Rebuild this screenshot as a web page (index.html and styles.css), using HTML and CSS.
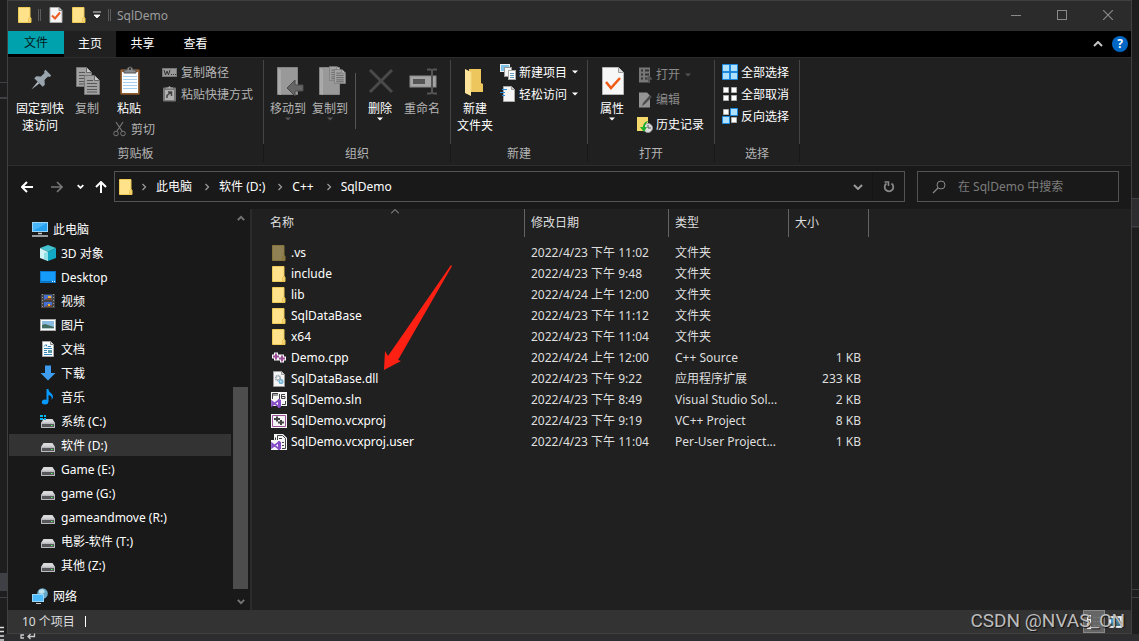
FILE: index.html
```html
<!DOCTYPE html>
<html lang="zh-CN">
<head>
<meta charset="utf-8">
<title>SqlDemo</title>
<link rel="stylesheet" href="styles.css">
</head>
<body>
<svg class="defs" aria-hidden="true">
  <symbol id="folder" viewBox="0 0 16 16"><path d="M2 .5h11v10l1 .5v4.500H1.500V.5z" fill="#ffe28a" stroke="#eecb57"/><path d="M11.500 15v-3.500l1.500-1V15z" fill="#ffe9a6" stroke="#e6b93c" stroke-width=".7"/></symbol>
  <symbol id="caret" viewBox="0 0 6 4"><path d="M0 .5h6L3 3.500z" fill="currentColor"/></symbol>
  <symbol id="chev" viewBox="0 0 6 8"><path d="M1.500 1l3 3-3 3" fill="none" stroke="currentColor" stroke-width="1.300"/></symbol>
  <symbol id="down" viewBox="0 0 10 6"><path d="M1 1l4 4 4-4" fill="none" stroke="currentColor" stroke-width="2"/></symbol>
  <symbol id="up" viewBox="0 0 10 6"><path d="M1 5l4-4 4 4" fill="none" stroke="currentColor" stroke-width="2"/></symbol>
  <symbol id="drive" viewBox="0 0 16 16"><path d="M3.500 6h9L15 10H1z" fill="#d9d9dc"/><rect x="1" y="9.500" width="14" height="5.500" rx=".5" fill="#b9babd"/><rect x="2" y="11" width="12" height="3" fill="#55575a"/><rect x="11" y="12" width="1.500" height="1" fill="#5dff5d"/></symbol>
  <symbol id="check-doc" viewBox="0 0 22 28"><path d="M.5.5h16l5 5v22H.5z" fill="#f7f7f7" stroke="#b5b5b5"/><path d="M16.500.5v5h5" fill="#ddd" stroke="#999"/><path d="M4 15l5 6 9-10" fill="none" stroke="#f05a14" stroke-width="2.500"/></symbol>
  <symbol id="sheet" viewBox="0 0 16 20"><path d="M.5.5h10l5 5v14H.5z" fill="#a2a2a2" stroke="#777"/><path d="M10.500.5v5h5" fill="#c8c8c8" stroke="#666"/><path d="M3 5.500h6M3 8.500h10M3 11.500h10M3 14.500h10M3 17h10" stroke="#575757"/></symbol>
  <symbol id="vs" viewBox="0 0 10 9"><path d="M7 0l3 1v7L7 9z" fill="#854cc7"/><path d="M1 2.500v4L8 1v7z" fill="none" stroke="#854cc7" stroke-width="1.600"/></symbol>
</svg>

<main class="window">
  <header class="titlebar">
    <svg class="i16"><use href="#folder"/></svg>
    <span class="grip"></span>
    <button class="quick" aria-label="属性"><svg class="i16" viewBox="0 0 16 16"><path d="M2 .5h9l3 3v12H2z" fill="#f5f5f5" stroke="#aaa"/><path d="M11 .5v3h3" fill="#ccc" stroke="#888"/><path d="M4 8.500l3 3 5-6" fill="none" stroke="#ed5b22" stroke-width="2"/></svg></button>
    <button class="quick" aria-label="新建文件夹"><svg class="i16"><use href="#folder"/></svg></button>
    <button class="more" aria-label="自定义快速访问工具栏"><svg width="8" height="8" viewBox="0 0 8 8"><path d="M0 1h8M1 4h6L4 7z" fill="#fff" stroke="#fff" stroke-width=".8"/></svg></button>
    <span class="grip"></span>
    <h1>SqlDemo</h1>
    <div class="caption">
      <button aria-label="最小化"><svg width="10" height="10"><path d="M0 5.500h10" stroke="#898989"/></svg></button>
      <button aria-label="最大化"><svg width="10" height="10"><rect x=".5" y=".5" width="9" height="9" fill="none" stroke="#898989"/></svg></button>
      <button aria-label="关闭"><svg width="10" height="10"><path d="M0 0l10 10M10 0L0 10" stroke="#898989" stroke-width="1.200"/></svg></button>
    </div>
  </header>

  <nav class="tabs">
    <button class="tab file">文件</button>
    <button class="tab active">主页</button>
    <button class="tab">共享</button>
    <button class="tab">查看</button>
    <div class="tabs-end">
      <button aria-label="最小化功能区"><svg width="10" height="6"><use href="#up"/></svg></button>
      <button class="help" aria-label="帮助">?</button>
    </div>
  </nav>

  <section class="ribbon">
    <div class="group clipboard">
      <div class="tools">
        <button class="big pin"><svg viewBox="0 0 32 32"><g transform="translate(18 13) rotate(45)"><path d="M-4-9h8v2l-1.500 1v5L6 2v3H-6V2l3.500-3v-5L-4-7z" fill="#9aa4ad"/><path d="M-1.200 5h2.400L0 15z" fill="#b2b9bf"/></g></svg>固定到快速访问</button>
        <button class="big dim"><svg viewBox="0 0 32 32"><use href="#sheet" x="5" y="1" width="16" height="20"/><use href="#sheet" x="13" y="9" width="16" height="20"/></svg>复制</button>
        <div class="paste">
          <button class="big"><svg viewBox="0 0 32 32"><rect x="7.500" y="3.500" width="19" height="25" rx="1" fill="#926037" stroke="#714823"/><path d="M9 6h16v21H9z" fill="#fafcff"/><path d="M10 10.500h14M10 13.500h14M10 16.500h14M10 19.500h14M10 22.500h14" stroke="#a6cfec"/><path d="M11 7V4h3c0-4 6-4 6 0h3v3z" fill="#878b8e" stroke="#555"/><circle cx="17" cy="3" r="1" fill="#222"/></svg>粘贴</button>
          <button class="small dim cut"><svg class="i16" viewBox="0 0 16 16"><path d="M4 1l6 9M11 1l-6 9" stroke="#777" stroke-width="1.200"/><circle cx="4" cy="12.500" r="2.300" fill="none" stroke="#777"/><circle cx="11" cy="12.500" r="2.300" fill="none" stroke="#777"/></svg>剪切</button>
        </div>
        <div class="list">
          <button class="small dim"><svg class="i16" viewBox="0 0 16 16"><rect x=".5" y="4.500" width="14" height="8" fill="#999" stroke="#777"/><path d="M2 6l1.500 5L5 7l1.500 4L8 6" stroke="#333" fill="none"/><path d="M9 10.500h1M11 10.500h1M13 10.500h1" stroke="#333"/></svg>复制路径</button>
          <button class="small dim"><svg class="i16" viewBox="0 0 16 16"><rect x="1" y="1.500" width="13" height="14" rx="1" fill="#777"/><rect x="3" y="4" width="9" height="10" fill="#b0b0b0"/><path d="M4 2.500h7v-1H9L7.500 0 6 1.500H4z" fill="#aaa"/><path d="M5 12V9.500L9 6M6 6h3.500v4" fill="none" stroke="#444" stroke-width="1.500"/></svg>粘贴快捷方式</button>
        </div>
      </div>
      <h2>剪贴板</h2>
    </div>

    <div class="group organize">
      <div class="tools">
        <button class="big dim"><svg viewBox="0 0 32 32"><path d="M5.500 1.500h20v27h-20z" fill="#999" stroke="#858585"/><path d="M6 2l3 2v25l-3-1z" fill="#aaa"/><path d="M15 22l8-8v5h8v6h-8v5z" fill="#666" stroke="#4a4a4a"/></svg>移动到<svg class="caret"><use href="#caret"/></svg></button>
        <button class="big dim"><svg viewBox="0 0 32 32"><path d="M5.500 1.500h20v27h-20z" fill="#999" stroke="#858585"/><path d="M6 2l3 2v25l-3-1z" fill="#aaa"/><use href="#sheet" x="15" y="0" width="12" height="15"/><use href="#sheet" x="20" y="3" width="12" height="15"/></svg>复制到<svg class="caret"><use href="#caret"/></svg></button>
        <span class="divider"></span>
        <button class="big"><svg viewBox="0 0 32 32"><path d="M6 4l22 22M28 4L6 26" stroke="#4a4a4a" stroke-width="3"/></svg>删除<svg class="caret"><use href="#caret"/></svg></button>
        <button class="big dim"><svg viewBox="0 0 32 32"><rect x="4" y="10" width="26" height="11" fill="#a4a4a4" stroke="#8a8a8a"/><rect x="7" y="13" width="12" height="5" fill="#555"/><path d="M21 3.500h3.500l1.500 1 1.500-1H31M21 27.500h3.500l1.500-1 1.500 1H31M26 4v23" fill="none" stroke="#555" stroke-width="2"/></svg>重命名</button>
      </div>
      <h2>组织</h2>
    </div>

    <div class="group create">
      <div class="tools">
        <button class="big"><svg viewBox="0 0 32 32"><path d="M10 3h12v14l2 1v8H10z" fill="#edc65e"/><path d="M6 3l6 3v24l-6-3z" fill="#ffe49a"/><path d="M12 6v18" stroke="#f5d57f"/></svg>新建<br>文件夹</button>
        <div class="list">
          <button class="small"><svg class="i16" viewBox="0 0 16 16"><rect x=".5" y=".5" width="9" height="7" fill="#7cc1e8" stroke="#eee"/><rect x="4.500" y="3.500" width="7" height="9" fill="#f4f4f4" stroke="#999"/><rect x="8.500" y="6.500" width="7" height="9" fill="#fff" stroke="#aaa"/><path d="M10 9.500h4M10 11.500h4M10 13.500h4" stroke="#679dbe"/></svg>新建项目<svg class="caret"><use href="#caret"/></svg></button>
          <button class="small"><svg class="i16" viewBox="0 0 16 16"><path d="M3.500.5h8l3 3v12h-11z" fill="#f5f5f5" stroke="#aaa"/><path d="M11.500.5v3h3" fill="#ccc" stroke="#999"/><path d="M2 3.500h5M0 6.500h5M2 9.500h3" stroke="#2a8bd4" stroke-width="1.200"/></svg>轻松访问<svg class="caret"><use href="#caret"/></svg></button>
        </div>
      </div>
      <h2>新建</h2>
    </div>

    <div class="group open">
      <div class="tools">
        <button class="big"><svg viewBox="0 0 32 32"><use href="#check-doc" x="6" y="1" width="22" height="28"/></svg>属性<svg class="caret"><use href="#caret"/></svg></button>
        <div class="list tall">
          <button class="small off"><svg class="i16" viewBox="0 0 16 16"><path d="M2 .5h11v15H2z" fill="#777"/><path d="M4 3.500h2M8 3.500h4M4 7.500h2M8 7.500h4M4 11.500h2M8 11.500h2" stroke="#333" stroke-width="2"/><path d="M12 16v-5M9.500 12.500L12 10l2.500 2.500" stroke="#555" stroke-width="2" fill="none"/></svg>打开<svg class="caret"><use href="#caret"/></svg></button>
          <button class="small off"><svg class="i16" viewBox="0 0 16 16"><path d="M2 .5h8l3 3v12H2z" fill="#949494"/><path d="M5 14l1-3 7-8 2 2-7 7z" fill="#4b4b4b"/></svg>编辑</button>
          <button class="small"><svg class="i16" viewBox="0 0 16 16"><path d="M0 0h11v14H0z" fill="#f5d86b"/><circle cx="11" cy="11" r="4.500" fill="#ddd" stroke="#999"/><path d="M11 8v3h3" fill="none" stroke="#555"/><path d="M12 4C8 4 6 7 6 10H3l4 5 3-5H8c0-3 1-4 4-6z" fill="#1faf31"/></svg>历史记录</button>
        </div>
      </div>
      <h2>打开</h2>
    </div>

    <div class="group select">
      <div class="tools">
        <div class="list">
          <button class="small"><svg class="i16" viewBox="0 0 16 16"><path d="M.5.5h7v7h-7zM8.500.5h7v7h-7zM.5 8.500h7v7h-7zM8.500 8.500h7v7h-7z" fill="#aee0ff" stroke="#1d8be0"/></svg>全部选择</button>
          <button class="small"><svg class="i16" viewBox="0 0 16 16"><path d="M1.500 1.500h5v5h-5zM9.500 1.500h5v5h-5zM1.500 9.500h5v5h-5zM9.500 9.500h5v5h-5z" fill="#fff" stroke="#b0b0b0"/></svg>全部取消</button>
          <button class="small"><svg class="i16" viewBox="0 0 16 16"><path d="M1.500 1.500h5v5h-5zM9.500 9.500h5v5h-5z" fill="#fff" stroke="#b0b0b0"/><path d="M8.500.5h7v7h-7zM.5 8.500h7v7h-7z" fill="#aee0ff" stroke="#1d8be0"/></svg>反向选择</button>
        </div>
      </div>
      <h2>选择</h2>
    </div>
  </section>

  <section class="navbar">
    <div class="arrows">
      <button aria-label="后退"><svg width="12" height="12" viewBox="0 0 12 12"><path d="M12 6H1M6 1L1 6l5 5" fill="none" stroke="#fff" stroke-width="2"/></svg></button>
      <button class="forward" aria-label="前进"><svg width="12" height="12" viewBox="0 0 12 12"><path d="M0 6h11M6 1l5 5-5 5" fill="none" stroke="#777" stroke-width="1.600"/></svg></button>
      <button class="recent" aria-label="最近浏览的位置"><svg width="7" height="5" viewBox="0 0 10 6"><path d="M1 1l4 4 4-4" fill="none" stroke="#fff" stroke-width="2.500"/></svg></button>
      <button class="parent" aria-label="上移"><svg width="12" height="12" viewBox="0 0 12 12"><path d="M6 12V1M1 6l5-5 5 5" fill="none" stroke="#fff" stroke-width="2"/></svg></button>
    </div>
    <div class="address">
      <svg class="i16"><use href="#folder"/></svg>
      <svg class="chev first"><use href="#chev"/></svg><a href="#pc">此电脑</a>
      <svg class="chev"><use href="#chev"/></svg><a href="#d">软件 (D:)</a>
      <svg class="chev"><use href="#chev"/></svg><a href="#cpp">C++</a>
      <svg class="chev"><use href="#chev"/></svg><a href="#sqldemo">SqlDemo</a>
      <button class="history" aria-label="以前的位置"><svg width="10" height="6"><use href="#down"/></svg></button>
      <button class="refresh" aria-label="刷新"><svg width="12" height="12" viewBox="0 0 12 12"><path d="M8.500 2.500A4.300 4.300 0 1 1 3.500 2.500" fill="none" stroke="#888" stroke-width="1.800"/><path d="M1.500 1h4v4" fill="none" stroke="#888" stroke-width="1.600"/></svg></button>
    </div>
    <label class="search">
      <svg width="14" height="14" viewBox="0 0 14 14"><circle cx="9" cy="5" r="4" fill="none" stroke="#888"/><path d="M6 8l-5 5" stroke="#888" stroke-width="1.200"/></svg>
      <input type="text" aria-label="搜索" placeholder="在 SqlDemo 中搜索">
    </label>
  </section>

  <div class="content">
    <aside class="sidebar">
      <ul class="tree">
        <li class="root"><a href="#pc"><svg class="i16" viewBox="0 0 16 16"><rect x=".5" y="1.500" width="15" height="9" fill="#49b6f8" stroke="#9bd6f8"/><path d="M1 10L15 2v8z" fill="#27a0ee"/><path d="M6 12.500h4M0 15h16" stroke="#c2c8cc" stroke-width="1.500"/></svg>此电脑</a></li>
        <li><a href="#3d"><svg class="i16" viewBox="0 0 16 16"><path d="M8 0l8 3-8 4-8-4z" fill="#43c2cf"/><path d="M0 3l8 4v9l-8-3z" fill="#d0f3f6"/><path d="M16 3L8 7v9l8-3z" fill="#12a9c4"/><path d="M8 7l-4 1v6l4 2z" fill="#8fe0e8"/></svg>3D 对象</a></li>
        <li><a href="#desktop"><svg class="i16" viewBox="0 0 16 16"><rect x=".5" y="2.500" width="15" height="11" fill="#159cf9" stroke="#0a77cc"/><path d="M1 12.500h14" stroke="#0870bd"/><path d="M12 12.500h1M14 12.500h1" stroke="#fff"/></svg>Desktop</a></li>
        <li><a href="#videos"><svg class="i16" viewBox="0 0 16 16"><path d="M1 1h14v14H1z" fill="#444"/><path d="M4 2h8v5H4zM4 9h8v5H4z" fill="#4670cf"/><path d="M8 5h4v2H4zM8 12h4v2H4z" fill="#7b4b35"/><path d="M8 3h3v2H8zM8 11h2v2H8z" fill="#edb233"/><path d="M2.500 1v14M13.500 1v14" stroke="#999" stroke-dasharray="1 2"/></svg>视频</a></li>
        <li><a href="#pictures"><svg class="i16" viewBox="0 0 16 16"><rect x=".5" y="2.500" width="15" height="11" fill="#fff" stroke="#aaa"/><path d="M2 4h12v8H2z" fill="#8bbce0"/><path d="M2 8l3-1 9 3v2H2z" fill="#446d62"/><path d="M2 11h12v1H2z" fill="#b0cbd0"/></svg>图片</a></li>
        <li><a href="#documents"><svg class="i16" viewBox="0 0 16 16"><path d="M2.500.5h8l3 3v12h-11z" fill="#fff" stroke="#aaa"/><path d="M10.500.5v3h3" fill="#ddd" stroke="#888"/><path d="M4 5.500l2-2 1 2M8 5.500h3M4 7.500h8M4 9.500h3M4 11.500h3M4 13.500h8" fill="none" stroke="#2f83bd"/><path d="M8 9h4v3H8z" fill="#5b9aa4"/></svg>文档</a></li>
        <li><a href="#downloads"><svg class="i16" viewBox="0 0 16 16"><path d="M5 .5h6V8h4.500L8 15.500.5 8H5z" fill="#3e9bed"/></svg>下载</a></li>
        <li><a href="#music"><svg class="i16" viewBox="0 0 16 16"><ellipse cx="5" cy="13" rx="3.200" ry="2.500" fill="#069aff"/><path d="M6.500 0h2c0 4 5 4 4.500 8.500L11.500 11c1-4-1.500-4.500-3-5v7h-2z" fill="#069aff"/></svg>音乐</a></li>
        <li><a href="#c"><svg class="i16" viewBox="0 0 16 16"><use href="#drive"/><path d="M0 2h3v2H0zM4 2h2v2H4zM0 5h3v2H0zM4 5h2v2H4z" fill="#00b7f1"/></svg>系统 (C:)</a></li>
        <li class="current"><a href="#d"><svg class="i16"><use href="#drive"/></svg>软件 (D:)</a></li>
        <li><a href="#e"><svg class="i16"><use href="#drive"/></svg>Game (E:)</a></li>
        <li><a href="#g"><svg class="i16"><use href="#drive"/></svg>game (G:)</a></li>
        <li><a href="#r"><svg class="i16"><use href="#drive"/></svg>gameandmove (R:)</a></li>
        <li><a href="#t"><svg class="i16"><use href="#drive"/></svg>电影-软件 (T:)</a></li>
        <li><a href="#z"><svg class="i16"><use href="#drive"/></svg>其他 (Z:)</a></li>
        <li class="root network"><a href="#network"><svg class="i16" viewBox="0 0 16 16"><circle cx="10.500" cy="5.500" r="5.300" fill="#69a9c8"/><path d="M7 2l4-1 2 3-3 2-3-1z" fill="#c1e2ed"/><rect x=".5" y="6.500" width="11" height="7" fill="#4bbbfb" stroke="#9bd6f8"/><path d="M4 15.500h5" stroke="#ccc"/></svg>网络</a></li>
      </ul>
      <div class="scrollbar">
        <svg width="8" height="7" viewBox="0 0 10 8"><path d="M1 6l4-4 4 4" fill="none" stroke="#747474" stroke-width="2.500"/></svg>
        <div class="track"><div class="thumb"></div></div>
        <svg width="8" height="7" viewBox="0 0 10 8"><path d="M1 2l4 4 4-4" fill="none" stroke="#747474" stroke-width="2.500"/></svg>
      </div>
    </aside>

    <section class="files">
      <table>
        <colgroup><col class="c-name"><col class="c-date"><col class="c-type"><col class="c-size"></colgroup>
        <thead><tr>
          <th><svg class="sort" width="8" height="5" viewBox="0 0 8 5"><path d="M0 4.500l4-4 4 4" fill="none" stroke="#aaa"/></svg><span>名称</span></th>
          <th><span>修改日期</span></th><th><span>类型</span></th><th><span>大小</span></th>
        </tr></thead>
        <tbody>
          <tr><td><div class="name"><svg class="i16 hidden-item"><use href="#folder"/></svg>.vs</div></td><td>2022/4/23 下午 11:02</td><td>文件夹</td><td></td></tr>
          <tr><td><div class="name"><svg class="i16"><use href="#folder"/></svg>include</div></td><td>2022/4/23 下午 9:48</td><td>文件夹</td><td></td></tr>
          <tr><td><div class="name"><svg class="i16"><use href="#folder"/></svg>lib</div></td><td>2022/4/24 上午 12:00</td><td>文件夹</td><td></td></tr>
          <tr><td><div class="name"><svg class="i16"><use href="#folder"/></svg>SqlDataBase</div></td><td>2022/4/23 下午 11:12</td><td>文件夹</td><td></td></tr>
          <tr><td><div class="name"><svg class="i16"><use href="#folder"/></svg>x64</div></td><td>2022/4/23 下午 11:04</td><td>文件夹</td><td></td></tr>
          <tr><td><div class="name"><svg class="i16" viewBox="0 0 16 16"><path d="M1 6.500h8M5 2.500v8M6 8.500h9M11 4.500v8" stroke="#f6f6f6" stroke-width="4"/><path d="M2 6.500h6M5 3.500v6M8 8.500h6M11 5.500v6" stroke="#9b4f96" stroke-width="2"/></svg>Demo.cpp</div></td><td>2022/4/24 上午 12:00</td><td>C++ Source</td><td>1 KB</td></tr>
          <tr><td><div class="name"><svg class="i16" viewBox="0 0 16 16"><path d="M2.500.5h8l3 3v12h-11z" fill="#f5f5f5" stroke="#999"/><path d="M10.500.5v3h3" fill="#ddd" stroke="#999"/><circle cx="7" cy="7" r="2.200" fill="none" stroke="#92a1ab" stroke-width="2" stroke-dasharray="1 .5"/><circle cx="10" cy="10.500" r="1.800" fill="#c5e3ef" stroke="#77b5d4" stroke-width="1.500"/></svg>SqlDataBase.dll</div></td><td>2022/4/23 下午 9:22</td><td>应用程序扩展</td><td>233 KB</td></tr>
          <tr><td><div class="name"><svg class="i16" viewBox="0 0 16 16"><path d="M0 0h16v14H0z" fill="#f6f6f6"/><path d="M1.500 7V1.500H7M1 3h6M14.500 9v3.500H11" fill="none" stroke="#424242"/><path d="M8.500 2v5M14 2.500h-3.500v4H14v-2h-3.500" fill="none" stroke="#424242"/><use href="#vs" x="0" y="7" width="10" height="9"/></svg>SqlDemo.sln</div></td><td>2022/4/23 下午 8:49</td><td>Visual Studio Sol...</td><td>2 KB</td></tr>
          <tr><td><div class="name"><svg class="i16" viewBox="0 0 16 16"><path d="M0 1h16v14H0z" fill="#f6f6f6"/><path d="M1.500 2.500h13v11h-13z" fill="none" stroke="#9b4f96"/><path d="M3 6h6M6 3.500v5M7 9.500h6M10 7v5" stroke="#424242" stroke-width="2"/></svg>SqlDemo.vcxproj</div></td><td>2022/4/23 下午 9:19</td><td>VC++ Project</td><td>8 KB</td></tr>
          <tr><td><div class="name"><svg class="i16" viewBox="0 0 16 16"><path d="M3 0h9l4 4v12H9V9H3z" fill="#f6f6f6"/><path d="M0 6h10v10H0z" fill="#f6f6f6"/><path d="M4.500 6V3.500M6.500 6V1.500h5l3 3v10H11" fill="none" stroke="#424242"/><path d="M8 4.500h3M11 8.500h2M11 11.500h2" stroke="#424242"/><use href="#vs" x="0" y="7" width="10" height="9"/></svg>SqlDemo.vcxproj.user</div></td><td>2022/4/23 下午 11:04</td><td>Per-User Project...</td><td>1 KB</td></tr>
        </tbody>
      </table>
      <svg class="pointer" width="70" height="108" viewBox="0 0 70 108" aria-hidden="true"><path d="M68 1l1 1-54 94 3 1-17 9 1-19 3 5z" fill="#ff2014"/></svg>
    </section>
  </div>

  <footer class="status">
    <span>10 个项目</span><span class="bar"></span>
    <div class="views">
      <button class="on" aria-label="详细信息"><svg width="16" height="16" viewBox="0 0 16 16"><path d="M1 1h4v14H1z" fill="#eee"/><path d="M2 3.500h2M2 7.500h2M2 11.500h2" stroke="#444" stroke-width="2"/><path d="M7 3.500h3M11 3.500h3M7 7.500h3M11 7.500h3M7 11.500h3M11 11.500h3" stroke="#777"/></svg></button>
      <button aria-label="大图标"><svg width="16" height="16" viewBox="0 0 16 16"><rect x="1" y="2.500" width="13" height="11" fill="#e8f4ff" stroke="#ddd"/><path d="M3 4h9v5H3z" fill="#4d99dd"/><path d="M3 9l4-2 5 3v2H3z" fill="#457889"/></svg></button>
    </div>
  </footer>
</main>
<svg class="behind" width="40" height="15" viewBox="0 0 40 15" aria-hidden="true"><path d="M0 1.500h4M0 5.500h4M0 10h4M0 14h4" stroke="#ddd" stroke-width="1.500"/><path d="M24 9h-3v3h3M34.500 7.500v3H28M30.500 8L28 10.500l2.500 2.500" fill="none" stroke="#ccc" stroke-width="1.300"/></svg>
<div class="watermark">CSDN @NVAS_CN</div>
</body>
</html>
```

FILE: styles.css
```css
* { box-sizing: border-box; }

body {
  margin: 0;
  min-height: 100vh;
  display: flex;
  flex-direction: column;
  padding: 0 7px 7px;
  font: 12px/17px "Noto Sans", "Noto Sans CJK SC", sans-serif;
  color: #fff;
  background:
    linear-gradient(#3f3f46, #3f3f46) 0 82px / 7px 1px no-repeat,
    linear-gradient(#3f3f46, #3f3f46) 0 97px / 7px 2px no-repeat,
    linear-gradient(#3f3f46, #3f3f46) 0 573px / 7px 18px no-repeat,
    linear-gradient(#3f3f46, #3f3f46) 0 597px / 7px 1px no-repeat,
    linear-gradient(#3f3f46, #3f3f46) 100% 198px / 7px 1px no-repeat,
    linear-gradient(#3f3f46, #3f3f46) 100% 226px / 7px 1px no-repeat,
    linear-gradient(#3f3f46, #3f3f46) 100% 589px / 7px 1px no-repeat,
    linear-gradient(#3f3f46, #3f3f46) 100% 597px / 7px 1px no-repeat,
    linear-gradient(#2d2d30, #2d2d30) 100% 198px / 7px 30px no-repeat,
    linear-gradient(#2d2d30, #2d2d30) 0 100% / 100% 7px no-repeat,
    #1e1e1e;
}

button {
  font: inherit;
  color: inherit;
  background: none;
  border: 0;
  padding: 0;
}

a { color: inherit; text-decoration: none; }
svg { display: block; flex: none; }
h1, h2 { margin: 0; font: inherit; }
.defs { display: none; }
.i16 { width: 16px; height: 16px; }

.window {
  flex: 1;
  display: flex;
  flex-direction: column;
  border: 1px solid #404040;
  background: #191919;
}

/* title bar */
.titlebar {
  display: flex;
  align-items: center;
  height: 30px;
  padding: 0 0 2px 9px;
  background: #2b2b2b;
}
.grip { width: 3px; height: 12px; margin: 0 6px 0 5px; border: solid #5c5c5c; border-width: 0 1px; }
.quick { width: 23px; padding-left: 1px; }
.more { width: 12px; }
.more + .grip { margin: 0 6px 0 3px; }
.titlebar h1 { color: #9c9c9c; }
.caption { display: flex; margin-left: auto; align-self: stretch; }
.caption button { width: 46px; display: grid; place-items: center; }

/* tabs */
.tabs { display: flex; height: 26px; background: #000; }
.tab { width: 53px; padding-bottom: 1px; }
.file { width: 56px; height: 23px; background: #00a2ad; color: #001c20; }
.tab.active { width: 52px; background: #202020; }
.tabs-end { display: flex; align-items: center; gap: 9px; margin-left: auto; padding-right: 3px; color: #c4c4c4; }
.help { width: 16px; height: 16px; border-radius: 50%; background: #0067c5; color: #fff; font-weight: 700; line-height: 16px; }

/* ribbon */
.ribbon {
  display: flex;
  height: 109px;
  padding-top: 2px;
  background: #202020;
  border-top: 1px solid #2c2c2c;
  border-bottom: 1px solid #2e2e2e;
}
.group { display: flex; flex-direction: column; min-width: 85px; }
.clipboard { min-width: 256px; }
.organize { min-width: 187px; }
.create { min-width: 137px; }
.open { min-width: 127px; }
.tools { display: flex; height: 84px; padding-left: 3px; border-right: 1px solid #454545; }
.clipboard .tools { padding-left: 6px; }
.group h2 { height: 18px; padding-top: 1px; text-align: center; color: #b4b4b4; border-right: 1px solid #181818; }
.big { width: 42px; display: flex; flex-direction: column; align-items: center; padding-top: 6px; height: 84px; }
.big > svg:first-child { width: 32px; height: 32px; margin-bottom: 2px; }
.pin { width: 52px; padding-inline: 2px; }
.caret { width: 6px; height: 4px; }
.dim { color: #b4b4b4; }
.dim .caret, .off .caret { color: #555; }
.off { color: #8a8a8a; }
.small { display: flex; align-items: center; gap: 3px; height: 22px; white-space: nowrap; }
.small .caret { margin-left: 2px; }
.paste { width: 48px; }
.paste .big { height: 58px; }
.cut { padding-left: 4px; }
.list { padding: 1px 0 0 4px; }
.clipboard .list { padding-left: 6px; }
.tall { padding-top: 2px; }
.tall .small { height: 25px; }
.divider { width: 1px; height: 56px; margin: 13px 3px 0 4px; background: #555; }

/* navigation row */
.navbar { display: flex; align-items: center; height: 43px; padding: 0 12px 2px 13px; }
.arrows { display: flex; align-items: center; width: 93px; }
.arrows button { padding-right: 18px; }
.arrows .forward { padding-right: 14px; }
.arrows .recent { padding-right: 11px; }
.arrows .parent { padding: 0; }
.address, .search { display: flex; align-items: center; height: 31px; border: 1px solid #535353; }
.address { flex: 1; padding-left: 3px; }
.address a { padding-right: 3px; }
.chev { width: 6px; height: 8px; margin: 0 9px; color: #999; }
.chev.first { margin-left: 7px; }
.history { margin-left: auto; width: 29px; height: 29px; display: grid; place-items: center; color: #999; border-right: 1px solid #141414; }
.refresh { width: 31px; display: grid; place-items: center; }
.search { width: 202px; margin-left: 12px; padding-left: 14px; gap: 12px; }
.search input { flex: 1; min-width: 0; padding: 0; border: 0; background: none; color: #fff; font: inherit; outline: 0; }
.search input::placeholder { color: #7c7c7c; opacity: 1; }

/* panes */
.content { flex: 1; display: flex; }
.sidebar { width: 244px; display: flex; border-right: 2px solid #2b2b2b; }
.tree { flex: 1; margin: 0; padding: 9px 1px 0; list-style: none; }
.tree li { height: 24px; }
.tree a { display: flex; align-items: center; gap: 5px; height: 22px; padding-left: 31px; }
.tree .root a { padding-left: 23px; }
.tree .current { background: #333; background-clip: content-box; padding-bottom: 2px; }
.tree .network { margin-top: 7px; }
.scrollbar { width: 15px; display: flex; flex-direction: column; align-items: center; padding: 6px 0 5px; margin: 0 2px 0 1px; }
.track { flex: 1; width: 15px; display: flex; align-items: flex-end; margin: 7px 0 9px; }
.thumb { width: 15px; height: 56%; background: #4d4d4d; }

.files { flex: 1; position: relative; background: #202020; }
table { table-layout: fixed; width: 617px; border-collapse: collapse; }
.c-name { width: 273px; }
.c-date { width: 144px; }
.c-type { width: 120px; }
.c-size { width: 80px; }
th { position: relative; height: 33px; padding: 0; text-align: left; font-weight: 400; color: #dedede; vertical-align: top; }
th span { display: block; height: 28px; padding: 5px 0 0 6px; border-right: 1px solid #636363; }
th:first-child span { padding-left: 18px; }
.sort { position: absolute; left: 139px; top: 0; }
td { height: 21px; padding: 0 0 0 6px; color: #dedede; white-space: nowrap; }
td:first-child { padding-left: 19px; color: #fff; }
td:last-child { padding: 0 8px 0 0; text-align: right; }
.name { display: flex; align-items: center; gap: 4px; }
.hidden-item { opacity: .5; }
.pointer { position: absolute; left: 131px; top: 55px; }

.status { display: flex; align-items: center; height: 23px; padding-left: 14px; background: #333; color: #dedede; }
.bar { width: 1px; height: 11px; margin-left: 10px; background: #fff; }
.views { display: flex; margin-left: auto; align-self: stretch; padding-right: 4px; }
.views button { width: 22px; display: grid; place-items: center; }
.views .on { background: #666; border: 1px solid #888; }

.behind { position: absolute; left: 0; bottom: 0; }
.watermark {
  position: absolute;
  right: 14px;
  bottom: 8px;
  font: 19px/24px Roboto, sans-serif;
  color: #bdbdbd;
  text-shadow: 1px 1px 1px #111;
}
```
